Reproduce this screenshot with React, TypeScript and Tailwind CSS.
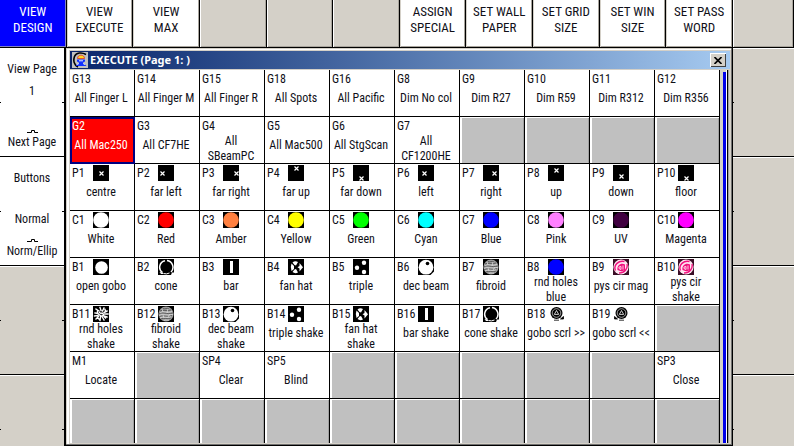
import type { ReactNode } from "react";

type Cell = {
  id: string;
  name: string[];
  icon?: ReactNode;
  selected?: boolean;
};

function Icon({ children, bg = "#000" }: { children?: ReactNode; bg?: string }) {
  return (
    <svg viewBox="0 0 16 16" className="size-4 shrink-0" aria-hidden="true">
      <rect width="16" height="16" fill={bg} />
      {children}
    </svg>
  );
}

const cross = (x: number, y: number) => (
  <Icon>
    <path
      d={`M${x - 2} ${y - 2}l4 4M${x + 2} ${y - 2}l-4 4`}
      stroke="#fff"
      strokeWidth="1.2"
    />
  </Icon>
);

const disc = (fill: string) => (
  <Icon>
    <circle cx="8" cy="8" r="7.8" fill={fill} />
  </Icon>
);

const openGobo = (
  <Icon>
    <circle cx="8.5" cy="8.5" r="6.3" fill="#fff" />
  </Icon>
);

const cone = (
  <Icon>
    <path d="M4.500 13.500A7 6.600 0 0 1 7 1.800M9 1.500A6.800 6.800 0 0 1 13 13" fill="none" stroke="#fff" strokeWidth="1.500" />
    <path d="M13 16l1-2.500h2V16zM1.500 13l3 .5 1 1.500H3z" fill="#fff" />
    <path d="M5.500 14.500q3 1 6-.5" fill="none" stroke="#fff" />
  </Icon>
);

const bar = (
  <Icon>
    <rect x="7" y="2" width="3" height="12" fill="#fff" />
  </Icon>
);

const fan = (
  <Icon>
    <path d="M4.500 3.500Q7 1.500 10 3L8 6.500 6.500 6zM4.500 13Q7 15 10 13.500L8 10 6.500 10.500z" fill="#fff" />
    <path d="M3.500 4.500L6 7v3l-2.500 2Q2 8.500 3.500 4.500z" fill="#fff" />
    <path d="M15 8.200L11.500 4v3L9.500 8.200l2 1.300v3z" fill="#fff" />
  </Icon>
);

const triple = (
  <Icon>
    <circle cx="11" cy="3.800" r="2.200" fill="#fff" />
    <circle cx="4" cy="8.800" r="2.200" fill="#fff" />
    <circle cx="11" cy="13" r="2.200" fill="#fff" />
  </Icon>
);

const decBeam = (
  <Icon>
    <circle cx="8" cy="8.200" r="7.400" fill="#fff" />
    <path d="M12.500 16l3.500-3.500V16z" fill="#fff" />
    <circle cx="9.500" cy="4.500" r="1.800" fill="#000" />
  </Icon>
);

const fibroid = (
  <Icon>
    <circle cx="8" cy="8" r="7.600" fill="#9c9c9c" />
    <path
      d="M2 5c3-2 6 1 11-1M1 8c4-3 7 1 14-1M1 10.500c4-2 8 1 13-1M3 13c3-2 6 1 10-1M5 2.500c2 1 4-1 6 .5"
      stroke="#4c4c4c"
      strokeWidth="0.800"
      fill="none"
    />
    <path
      d="M2 6.500c4-2 7 1 12-1M1 9.300c4-2 8 1 14-1M2 11.800c4-2 7 1 11-1M6 14.500c2-1 3 0 5-.5M4 3l1 3M10 3l-1 4M12 8l-2 3M5 9l1 3"
      stroke="#e4e4e4"
      strokeWidth="0.700"
      fill="none"
    />
  </Icon>
);

const holes = (
  <Icon>
    <path
      d="M3 3l3 2M7 1.500l1 3M11 2L9.500 5M14 5l-3 1.500M2 7l3 .5M1.500 10L5 9.500M3 13l2.500-2.500M7 14.500L7.500 11M11 14l-1.500-2.500M14 11l-3-1M15 8h-3M6.500 6.500l1.500 1M9 7l1.500 1.500M6 8.500l2 1.500M9 10l1.500-.5M4.500 4.500v2M12 3.500l.5 1.500M12.500 12l-1-1M5 12.500l1 .5"
      stroke="#fff"
      strokeWidth="1.400"
      strokeLinecap="square"
    />
  </Icon>
);

const prism = (
  <Icon bg="#3a0d25">
    <circle cx="8" cy="8" r="7.600" fill="#ffe6f2" />
    <path d="M2.500 11.500C0 6 6 1 11.500 2.500M14 5c1 4-2 9-8 9" fill="none" stroke="#f0107e" strokeWidth="1.400" />
    <path d="M4.500 11C3.500 6.500 8 3.500 12 5.500v5.500L8.500 12.500z" fill="#f0107e" />
    <path d="M6 9.500V8l2-.5v3zM10 6.500v4" fill="none" stroke="#ffe6f2" strokeWidth="0.900" />
  </Icon>
);

const scroll = (left: boolean) => (
  <Icon bg="#fff">
    <circle cx="8.500" cy="7" r="6" fill="#000" />
    <circle cx="8.500" cy="7" r="4.300" fill="none" stroke="#fff" strokeWidth="0.600" />
    <path d="M8.500 4.500l2.200 3.900H6.300z" fill="#000" stroke="#fff" strokeWidth="0.800" />
    <path
      d={left ? "M1.500 10.500v2.500h3zM6 14.200h5" : "M15.500 10.500v2.500h-3zM6 14.200h5"}
      fill="#000"
      stroke="#000"
      strokeWidth="0.800"
    />
  </Icon>
);

const cell = (id: string, name: string, icon?: ReactNode): Cell => ({
  id,
  name: name.split("|"),
  icon,
});

const rows: (Cell | null)[][] = [
  [
    cell("G13", "All Finger L"),
    cell("G14", "All Finger M"),
    cell("G15", "All Finger R"),
    cell("G18", "All Spots"),
    cell("G16", "All Pacific"),
    cell("G8", "Dim No col"),
    cell("G9", "Dim R27"),
    cell("G10", "Dim R59"),
    cell("G11", "Dim R312"),
    cell("G12", "Dim R356"),
  ],
  [
    { ...cell("G2", "All Mac250"), selected: true },
    cell("G3", "All CF7HE"),
    cell("G4", "All|SBeamPC"),
    cell("G5", "All Mac500"),
    cell("G6", "All StgScan"),
    cell("G7", "All|CF1200HE"),
    null,
    null,
    null,
    null,
  ],
  [
    cell("P1", "centre", cross(8.5, 8.5)),
    cell("P2", "far left", cross(4.5, 8.5)),
    cell("P3", "far right", cross(13.5, 8.5)),
    cell("P4", "far up", cross(8.5, 3.5)),
    cell("P5", "far down", cross(8.5, 13.5)),
    cell("P6", "left", cross(6.5, 8.5)),
    cell("P7", "right", cross(11.5, 8.5)),
    cell("P8", "up", cross(8.5, 5.5)),
    cell("P9", "down", cross(8.5, 11.5)),
    cell("P10", "floor", cross(8.5, 13.5)),
  ],
  [
    cell("C1", "White", disc("#ffffff")),
    cell("C2", "Red", disc("#ff0000")),
    cell("C3", "Amber", disc("#ff8040")),
    cell("C4", "Yellow", disc("#ffff00")),
    cell("C5", "Green", disc("#00ff00")),
    cell("C6", "Cyan", disc("#00ffff")),
    cell("C7", "Blue", disc("#0000ff")),
    cell("C8", "Pink", disc("#ff80ff")),
    cell("C9", "UV", disc("#400040")),
    cell("C10", "Magenta", disc("#ff00ff")),
  ],
  [
    cell("B1", "open gobo", openGobo),
    cell("B2", "cone", cone),
    cell("B3", "bar", bar),
    cell("B4", "fan hat", fan),
    cell("B5", "triple", triple),
    cell("B6", "dec beam", decBeam),
    cell("B7", "fibroid", fibroid),
    cell("B8", "rnd holes|blue", disc("#0000ff")),
    cell("B9", "pys cir mag", prism),
    cell("B10", "pys cir|shake", prism),
  ],
  [
    cell("B11", "rnd holes|shake", holes),
    cell("B12", "fibroid|shake", fibroid),
    cell("B13", "dec beam|shake", decBeam),
    cell("B14", "triple shake", triple),
    cell("B15", "fan hat|shake", fan),
    cell("B16", "bar shake", bar),
    cell("B17", "cone shake", cone),
    cell("B18", "gobo scrl >>", scroll(false)),
    cell("B19", "gobo scrl <<", scroll(true)),
    null,
  ],
  [
    cell("M1", "Locate"),
    null,
    cell("SP4", "Clear"),
    cell("SP5", "Blind"),
    null,
    null,
    null,
    null,
    null,
    cell("SP3", "Close"),
  ],
  [null, null, null, null, null, null, null, null, null, null],
];

const topButtons: (string[] | null)[] = [
  ["VIEW", "DESIGN"],
  ["VIEW", "EXECUTE"],
  ["VIEW", "MAX"],
  null,
  null,
  null,
  ["ASSIGN", "SPECIAL"],
  ["SET WALL", "PAPER"],
  ["SET GRID", "SIZE"],
  ["SET WIN", "SIZE"],
  ["SET PASS", "WORD"],
  null,
];

function TopButton({ lines, active }: { lines: string[] | null; active: boolean }) {
  if (!lines) {
    return <div className="border-r border-b border-black bg-[#d4d0c8] shadow-[inset_1px_0_#fff,inset_-1px_-1px_#a8a49c]" />;
  }
  return (
    <button
      className={
        active
          ? "flex flex-col items-center border-r border-b border-black bg-[#0000ff] pt-1 text-[13px] leading-4 text-white shadow-[inset_-1px_-1px_#8080c0]"
          : "flex flex-col items-center border-r border-b border-black bg-white pt-1 text-[13px] leading-4 shadow-[inset_1px_0_#d4d0c8,inset_-1px_-1px_#a8a49c]"
      }
    >
      {lines.map((l) => (
        <span key={l}>{l}</span>
      ))}
    </button>
  );
}

function GridCell({ data, last }: { data: Cell | null; last: boolean }) {
  const edge = last ? "h-11 border-r border-black" : "h-[47px] border-r border-b border-black";
  if (!data) {
    return (
      <div className={edge}>
        <div className="h-full border-t border-l-2 border-white bg-[#c0c0c0] shadow-[inset_-1px_0_#a0a0a0]" />
      </div>
    );
  }
  return (
    <button
      className={
        data.selected
          ? "h-[47px] border-r border-b border-[#000080] bg-[#ff0000] text-left text-white shadow-[inset_2px_2px_#000080,inset_-1px_-1px_#000080]"
          : edge + " bg-white text-left"
      }
    >
      <span className="flex h-full flex-col pt-px">
        <span className="flex h-4 leading-4">
          <span className="w-[23px] shrink-0 pl-0.5">{data.id}</span>
          {data.icon}
        </span>
        <span
          className={
            data.name.length > 1
              ? "flex flex-col items-center pr-0.5 leading-[15px] whitespace-nowrap"
              : "flex flex-col items-center pt-1 pr-0.5 leading-[14px] whitespace-nowrap"
          }
        >
          {data.name.map((n) => (
            <span key={n}>{n}</span>
          ))}
        </span>
      </span>
    </button>
  );
}

function Pulse() {
  return (
    <svg viewBox="0 0 11 3" className="h-[3px] w-[11px]" aria-hidden="true">
      <path d="M0 2.500h4.500v-2h3v2H11" fill="none" stroke="#000" />
    </svg>
  );
}

function Ticks({ both }: { both?: boolean }) {
  return (
    <div className="flex h-px justify-between">
      <span className="w-px bg-black" />
      {both && <span className="w-0.5 bg-black" />}
    </div>
  );
}

function SideKey({ top, middle, bottom }: { top: string[]; middle?: string; bottom: string }) {
  return (
    <button className="block h-[109px] w-full border-b border-black bg-white text-center leading-[14px]">
      <span className="flex h-[54px] flex-col gap-2 pt-3.5">
        {top.map((t) => (
          <span key={t}>{t}</span>
        ))}
      </span>
      <Ticks both />
      <span className="flex h-[53px] flex-col justify-between pb-[7px]">
        <span>{middle}</span>
        <span className="flex flex-col items-center gap-0.5">
          <Pulse />
          {bottom}
        </span>
      </span>
    </button>
  );
}

function BlankKey({ both, end }: { both?: boolean; end?: boolean }) {
  return (
    <div
      className={
        end
          ? "flex-1 bg-[#d4d0c8] pt-[54px] shadow-[inset_0_1px_#fff]"
          : "h-[109px] border-b border-black bg-[#d4d0c8] pt-[54px] shadow-[inset_0_1px_#fff]"
      }
    >
      <Ticks both={both} />
    </div>
  );
}

function WindowIcon() {
  return (
    <svg viewBox="0 0 16 16" className="size-4" aria-hidden="true">
      <rect width="16" height="16" fill="#c0c0c0" />
      <path d="M14 2.500C10 0 4 .5 2.500 4.500S2 13 6 15" fill="none" stroke="#000" strokeWidth="1.600" />
      <path d="M5.500 6.500c0-4.500 7-4.500 7 0z" fill="#ffd820" stroke="#e03020" strokeWidth="0.800" />
      <path d="M5 7.500h8v2l-2 1 3.500 3.500h-11L7 10.500l-2-1z" fill="#1030ff" />
      <path d="M7 8.800h4M5 12.500l2-1M13 12.500l-2-1" stroke="#fff" strokeWidth="0.900" />
    </svg>
  );
}

export default function App() {
  return (
    <main className="min-h-screen bg-[#d4d0c8] font-['Roboto_Condensed','Liberation_Sans',sans-serif] text-[12px] text-[#101018]">
      <nav className="grid h-12 grid-cols-[repeat(11,minmax(0,1fr))_61px]">
        {topButtons.map((b, i) => (
          <TopButton key={i} lines={b} active={i === 0} />
        ))}
      </nav>
      <div className="grid grid-cols-[66px_minmax(0,1fr)_61px]">
        <aside className="flex flex-col border-r-2 border-black">
          <SideKey top={["View Page", "1"]} bottom="Next Page" />
          <SideKey top={["Buttons"]} middle="Normal" bottom="Norm/Ellip" />
          <BlankKey both />
          <BlankKey both end />
        </aside>

        <section className="border-r border-b border-black bg-[#d4d0c8]">
          <div className="border-r border-b border-[#707070] pt-px pl-px">
            <div className="border-t border-l-2 border-white pr-px pb-px pl-px">
              <header className="mt-px flex h-[18px] items-center gap-0.5 bg-linear-to-r from-[#0a246a] to-[#a6caf0] pr-1 pl-0.5">
                <WindowIcon />
                <h1 className="flex-1 font-['Noto_Sans',sans-serif] text-[11px] leading-4 font-bold text-white">
                  EXECUTE (Page 1: )
                </h1>
                <button
                  aria-label="Close"
                  className="flex h-3.5 w-4 items-center justify-center bg-[#d4d0c8] shadow-[inset_1px_1px_#fff,inset_-1px_-1px_#404040]"
                >
                  <svg viewBox="0 0 8 7" className="h-[7px] w-2" aria-hidden="true">
                    <path d="M.5 0l7 7M7.500 0l-7 7" stroke="#000" strokeWidth="1.600" />
                  </svg>
                </button>
              </header>
              <div className="flex pt-px">
                <div className="grid flex-1 grid-cols-10">
                  {rows.map((row, r) =>
                    row.map((c, i) => <GridCell key={`${r}-${i}`} data={c} last={r === rows.length - 1} />),
                  )}
                </div>
                <div className="flex w-2.5 pl-[3px]">
                  <div className="mt-0.5 w-[3px] bg-[#0000e8]" />
                  <div className="w-px bg-white" />
                  <div className="w-px bg-black" />
                  <div className="w-px bg-[#a0a0a0]" />
                </div>
              </div>
            </div>
          </div>
        </section>

        <aside className="flex flex-col">
          <BlankKey />
          <BlankKey />
          <BlankKey />
          <BlankKey end />
        </aside>
      </div>
    </main>
  );
}
